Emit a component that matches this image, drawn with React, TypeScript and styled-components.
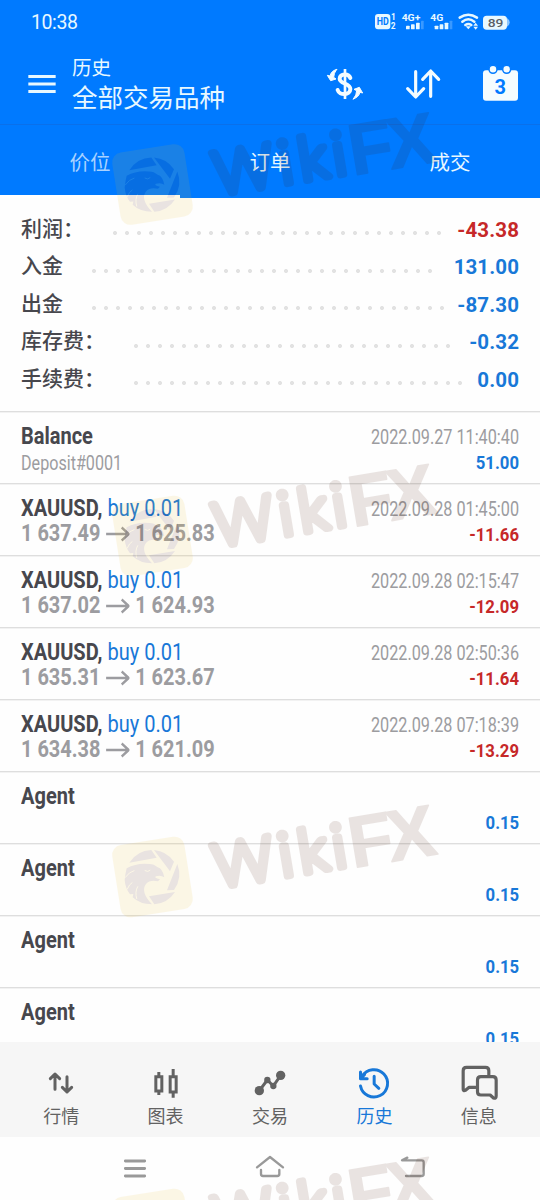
import React from 'react';
import styled, { createGlobalStyle } from 'styled-components';

const GlobalStyle = createGlobalStyle`
  * { box-sizing: border-box; }
  body { margin: 0; background: #fff; }
`;

const latin = `Roboto, "Noto Sans CJK SC", sans-serif`;
const blue = '#007aff';
const valueBlue = '#1878d8';
const lossRed = '#c62828';

const Screen = styled.div`
  position: relative;
  display: flex;
  flex-direction: column;
  width: 540px;
  height: 1200px;
  overflow: hidden;
  background: #fefefe;
  font-family: ${latin};
  color: #47474d;
`;

const Header = styled.header`
  flex: none;
  background: ${blue};
  color: #e8f8ff;
`;

const StatusBar = styled.div`
  display: flex;
  align-items: center;
  justify-content: space-between;
  height: 44px;
  padding: 0 28px 4px 31px;
`;

const Clock = styled.span`
  font-size: 19.5px;
  line-height: 24px;
  padding-top: 5px;
  letter-spacing: -0.4px;
`;

const AppBar = styled.div`
  display: flex;
  align-items: center;
  height: 81px;
  padding: 0 20px 0 22px;
  border-bottom: 1px solid #0a70ea;
`;

const Titles = styled.div`
  flex: 1;
  margin-left: 10px;
  padding-top: 2px;
`;

const Title = styled.div`
  font-size: 19.5px;
  line-height: 27px;
`;

const Subtitle = styled.div`
  font-size: 25.5px;
  line-height: 33px;
`;

const Actions = styled.div`
  display: flex;
  gap: 37.5px;
`;

const Tabs = styled.div`
  display: flex;
  height: 73px;
`;

const Tab = styled.div<{ $active?: boolean }>`
  flex: 1;
  text-align: center;
  font-size: 20.5px;
  line-height: 76px;
  height: 73px;
  color: ${p => (p.$active ? '#a9d2ff' : '#e8f8ff')};
  border-bottom: 3px solid ${p => (p.$active ? '#fff' : blue)};
`;

const Summary = styled.section`
  flex: none;
  height: 213px;
  padding: 13px 21px 0;
`;

const SummaryRow = styled.div`
  display: flex;
  align-items: center;
  height: 37.5px;
`;

const SummaryLabel = styled.span`
  font-size: 21px;
  line-height: 35px;
  padding-bottom: 1px;
  font-weight: 500;
`;

const Dots = styled.span<{ $count: number }>`
  width: ${p => p.$count * 12}px;
  height: 4px;
  margin: 7px 0 0 29px;
  background: radial-gradient(circle at 2px 2px, #e2e2e2 1.7px, transparent 2.3px) 0 0 / 12px 4px repeat-x;
`;

const SummaryValue = styled.span<{ $loss?: boolean }>`
  margin-left: auto;
  font-size: 20.5px;
  font-weight: 700;
  letter-spacing: 0.1px;
  color: ${p => (p.$loss ? lossRed : valueBlue)};
`;

const List = styled.section`
  flex: 1;
  min-height: 0;
  overflow: hidden;
`;

const Row = styled.div`
  display: flex;
  justify-content: space-between;
  height: 72px;
  padding: 12px 21px 0;
  border-top: 1px solid #dedede;
  box-shadow: inset 0 1px 0 #f2f2f2;
  white-space: nowrap;
`;

const RowRight = styled.div`
  padding-top: 1px;
  text-align: right;
`;

const Heading = styled.div`
  font-size: 23px;
  line-height: 26px;
  font-weight: 700;
  transform: scaleX(0.87);
  transform-origin: left top;
`;

const Side = styled.span`
  font-weight: 400;
  color: ${valueBlue};
`;

const Note = styled.div`
  font-size: 19.5px;
  line-height: 27px;
  color: #9c9ca0;
  transform: scaleX(0.827);
  transform-origin: left top;
`;

const Prices = styled.div`
  display: flex;
  align-items: center;
  font-size: 23px;
  line-height: 23px;
  font-weight: 700;
  color: #9c9ca0;
  transform: scaleX(0.868);
  transform-origin: left top;
`;

const Arrow = styled.svg`
  width: 27px;
  height: 16px;
  margin: 0 6.5px;
`;

const Time = styled.div`
  font-size: 19.5px;
  line-height: 26px;
  color: #9c9ca0;
  transform: scaleX(0.832);
  transform-origin: right top;
`;

const Amount = styled.div<{ $loss?: boolean }>`
  font-size: 19px;
  line-height: 23px;
  font-weight: 700;
  color: ${p => (p.$loss ? lossRed : valueBlue)};
  transform: scaleX(0.88);
  transform-origin: right top;
`;

const BottomNav = styled.nav`
  flex: none;
  display: flex;
  height: 95px;
  padding: 23px 9px 0;
  background: #f6f6f6;
`;

const NavItem = styled.div<{ $active?: boolean }>`
  flex: 1;
  display: flex;
  flex-direction: column;
  align-items: center;
  font-size: 18px;
  line-height: 31px;
  color: ${p => (p.$active ? valueBlue : '#626262')};
`;

const SystemNav = styled.div`
  flex: none;
  display: flex;
  gap: 95px;
  height: 63px;
  padding: 16px 0 0 115px;
  color: #999;
`;

const Icon = styled.svg`
  display: block;
  flex: none;
  fill: none;
  stroke: currentColor;
  stroke-linecap: round;
  stroke-linejoin: round;
`;

const WatermarkLayer = styled.svg`
  position: absolute;
  left: 0;
  top: 0;
  pointer-events: none;
`;

const StatusIcons = () => (
  <svg width="140" height="20" viewBox="306 28 420 60" fill="#e8f8ff" fontFamily="Roboto" fontWeight="700">
    <rect x="315" y="40" width="46" height="46" rx="9" />
    <text x="320" y="74" fontSize="31" fill={blue} textLength="36" lengthAdjust="spacingAndGlyphs">HD</text>
    <text x="363" y="59" fontSize="25">1</text>
    <text x="362" y="85" fontSize="25">2</text>
    <text x="395" y="60" fontSize="28" textLength="56" lengthAdjust="spacingAndGlyphs">4G+</text>
    <text x="481" y="60" fontSize="28" textLength="39" lengthAdjust="spacingAndGlyphs">4G</text>
    {[408, 494].map(x => (
      <g key={x}>
        <rect x={x} y="75" width="11" height="11" rx="2" />
        <rect x={x + 15} y="71" width="11" height="15" rx="2" />
        <rect x={x + 30} y="66" width="11" height="20" rx="2" />
        <rect x={x + 45} y="60" width="8" height="26" rx="2" opacity="0.25" />
      </g>
    ))}
    <g fill="none" stroke="#e8f8ff" strokeWidth="7.500" strokeLinecap="round">
      <path d="M569 51Q595 34 621 51" />
      <path d="M577 63Q595 49 613 63" />
      <path d="M586 73Q595 67 604 73" />
    </g>
    <path d="M587 77h16l-8 9zM610 75l7-9 7 9zM610 78l7 9 7-9z" />
    <rect x="639" y="45" width="72" height="42" rx="11" />
    <path d="M711 52q8 5 8 13t-8 13z" opacity="0.6" />
    <text x="653" y="78" fontSize="35" fontWeight="500" fill="#5a5f66" textLength="47" lengthAdjust="spacingAndGlyphs">89</text>
  </svg>
);

const MenuIcon = () => (
  <Icon width="40" height="40" viewBox="66 192 120 120" strokeWidth="9">
    <path strokeLinecap="butt" d="M85 229.500h82M85 252h82M85 274.500h82" />
  </Icon>
);

const CurrencyIcon = () => (
  <Icon width="40" height="40" viewBox="165 192 120 120" strokeWidth="12" color="#f4fcff">
    <path strokeWidth="8" strokeLinecap="butt" d="M225 207v90" />
    <path d="M241 234C236 219 209 220 209 236C209 252 241 249 241 267C241 286 208 287 203 270" />
    <path strokeWidth="3" fill="currentColor" d="M200 208Q183 213 180 228L172 226L182 242L198 237L191 232Q191 220 200 208z" />
    <path strokeWidth="3" fill="currentColor" d="M250 297Q267 291 270 277L278 279L268 262L252 268L260 272Q260 285 250 297z" />
  </Icon>
);

const SortIcon = () => (
  <Icon width="40" height="40" viewBox="399 192 120 120" strokeWidth="9.500" color="#f4fcff">
    <path d="M437 215v75M413 266l24 25 24-25M482 289v-75M458 238l24-25 24 25" />
  </Icon>
);

const CalendarIcon = () => (
  <Icon width="40" height="40" viewBox="630 192 120 120" color="#f4fcff">
    <rect x="639" y="211" width="105" height="91" rx="9" fill="currentColor" stroke="none" />
    {[669, 710].map(x => (
      <circle key={x} cx={x} cy="208" r="12" fill="#f4fcff" stroke={blue} strokeWidth="4.500" />
    ))}
    <text x="691" y="283" textAnchor="middle" fontFamily="Roboto" fontWeight="700" fontSize="60" fill={blue} stroke="none">3</text>
  </Icon>
);

const navItems = [
  {
    label: '行情',
    box: '123 105 120 108',
    art: <path d="M165 178v-46M151 146l14-14 14 14M201 140v46M187 172l14 14 14-14" />,
  },
  {
    label: '图表',
    box: '436.5 105 120 108',
    art: (
      <g strokeLinecap="butt" strokeLinejoin="miter">
        <path d="M466 140h18v43h-18zM475 126v12M475 185v10M509 140h18v46h-18zM518 117v21M518 188v15" />
      </g>
    ),
  },
  {
    label: '交易',
    box: '45 75 120 108',
    art: (
      <g>
        <path d="M73 152L97 120L115 138L137 106" />
        <g fill="currentColor" stroke="none">
          <circle cx="73" cy="152" r="14" />
          <circle cx="97" cy="120" r="9.500" />
          <circle cx="115" cy="138" r="9.500" />
          <circle cx="137" cy="106" r="14" />
        </g>
      </g>
    ),
  },
  {
    label: '历史',
    active: true,
    box: '253.5 105 120 108',
    art: (
      <g>
        <path d="M273 168A41 41 0 1 0 278 139" />
        <path d="M273 126v20h20M273 146l12-12M314 139v23l14 13" />
      </g>
    ),
  },
  {
    label: '信息',
    box: '565.5 105 120 108',
    art: (
      <g strokeWidth="9.500">
        <path d="M655 134V122Q655 112 645 112H588Q578 112 578 122V178Q578 184 585 181L596 172H615" />
        <path d="M631 140H667Q677 140 677 150V198Q677 207 669 204L659 195H631Q621 195 621 185V150Q621 140 631 140z" />
      </g>
    ),
  },
];

const summary = [
  { label: '利润：', dots: 28, value: '-43.38', loss: true },
  { label: '入金', dots: 29, value: '131.00' },
  { label: '出金', dots: 30, value: '-87.30' },
  { label: '库存费：', dots: 27, value: '-0.32' },
  { label: '手续费：', dots: 28, value: '0.00' },
];

const trades = [
  { open: '1 637.49', close: '1 625.83', time: '2022.09.28 01:45:00', amount: '-11.66' },
  { open: '1 637.02', close: '1 624.93', time: '2022.09.28 02:15:47', amount: '-12.09' },
  { open: '1 635.31', close: '1 623.67', time: '2022.09.28 02:50:36', amount: '-11.64' },
  { open: '1 634.38', close: '1 621.09', time: '2022.09.28 07:18:39', amount: '-13.29' },
];

const Watermark = ({ top }: { top: number }) => (
  <g transform={`translate(0 ${top})`} opacity="0.11">
    <rect x="-36.500" y="-36.500" width="73" height="73" rx="10" transform="translate(152.500 184.500) rotate(-9)" fill="#ecbc26" />
    <g transform="translate(90 97.500) scale(0.33333)" fill="#461400">
      <path d="M118 218A82 82 0 0 1 184 180L200 203z" />
      <path d="M192 180A82 82 0 0 1 252 215L240 244z" />
      <path d="M262 222A82 82 0 0 1 252 300L231 301z" />
      <path d="M255 306A82 82 0 0 1 193 343L177 319z" />
      <path d="M110 235Q140 218 178 222Q192 222 203 232Q218 236 223 262Q212 254 198 259Q190 264 210 268L204 274Q180 268 168 282Q150 305 186 343Q150 343 128 322L130 312L120 313Q106 295 104 270Q106 250 110 235z" />
    </g>
    <g transform="translate(90 97.500) scale(0.33333)" stroke="#ecbc26" fill="none" strokeWidth="3" strokeLinecap="round">
      <path d="M165 242Q174 248 180 241M106 262Q118 245 132 242M112 297Q118 282 126 278M140 326Q134 305 143 290" />
    </g>
    <g transform="translate(210 200.500) rotate(-9.500)" fill="#461400" stroke="#461400" strokeLinejoin="round">
      <g fontFamily="Lato" fontWeight="300" fontSize="60" strokeWidth="7.500">
        <text x="8" y="-4" textLength="60" lengthAdjust="spacingAndGlyphs">W</text>
        <text x="74" y="-4">i</text>
        <text x="94" y="-4">k</text>
        <text x="128" y="-4">i</text>
      </g>
      <g fontFamily="Liberation Sans" fontWeight="700" fontSize="72" strokeWidth="1.500">
        <text x="145" y="-1">F</text>
        <text x="184" y="-1">X</text>
      </g>
    </g>
  </g>
);

export default function App() {
  return (
    <Screen>
      <GlobalStyle />
      <Header>
        <StatusBar>
          <Clock>10:38</Clock>
          <StatusIcons />
        </StatusBar>
        <AppBar>
          <MenuIcon />
          <Titles>
            <Title>历史</Title>
            <Subtitle>全部交易品种</Subtitle>
          </Titles>
          <Actions>
            <CurrencyIcon />
            <SortIcon />
            <CalendarIcon />
          </Actions>
        </AppBar>
        <Tabs>
          <Tab $active>价位</Tab>
          <Tab>订单</Tab>
          <Tab>成交</Tab>
        </Tabs>
      </Header>

      <Summary>
        {summary.map(s => (
          <SummaryRow key={s.label}>
            <SummaryLabel>{s.label}</SummaryLabel>
            <Dots $count={s.dots} />
            <SummaryValue $loss={s.loss}>{s.value}</SummaryValue>
          </SummaryRow>
        ))}
      </Summary>

      <List>
        <Row>
          <div>
            <Heading>Balance</Heading>
            <Note>Deposit#0001</Note>
          </div>
          <RowRight>
            <Time>2022.09.27 11:40:40</Time>
            <Amount>51.00</Amount>
          </RowRight>
        </Row>
        {trades.map(t => (
          <Row key={t.time}>
            <div>
              <Heading>
                XAUUSD, <Side>buy 0.01</Side>
              </Heading>
              <Prices>
                {t.open}
                <Arrow viewBox="0 0 27 16" fill="none" stroke="currentColor" strokeWidth="2.600">
                  <path d="M0 8h26M18 1.500l8 6.500-8 6.500" />
                </Arrow>
                {t.close}
              </Prices>
            </div>
            <RowRight>
              <Time>{t.time}</Time>
              <Amount $loss>{t.amount}</Amount>
            </RowRight>
          </Row>
        ))}
        {[0, 1, 2, 3].map(i => (
          <Row key={i}>
            <div>
              <Heading>Agent</Heading>
            </div>
            <RowRight>
              <Time>&nbsp;</Time>
              <Amount>0.15</Amount>
            </RowRight>
          </Row>
        ))}
      </List>

      <BottomNav>
        {navItems.map(n => (
          <NavItem key={n.label} $active={n.active}>
            <Icon width="40" height="36" viewBox={n.box} strokeWidth="9">
              {n.art}
            </Icon>
            {n.label}
          </NavItem>
        ))}
      </BottomNav>

      <SystemNav>
        <Icon width="40" height="30" viewBox="345 369 120 90" strokeWidth="8.500">
          <path d="M376 393h58M376 415.500h58M376 438h58" />
        </Icon>
        <Icon width="40" height="30" viewBox="45 339 120 90" strokeWidth="7">
          <path d="M66 382L105 351L144 382M78 390V402Q78 408 84 408H127Q133 408 133 402V390" />
        </Icon>
        <Icon width="40" height="30" viewBox="345 369 120 90" strokeWidth="7">
          <path d="M412 383L396 391H455Q461 391 461 397V432Q461 438 455 438H408" />
        </Icon>
      </SystemNav>

      <WatermarkLayer width="540" height="1200">
        {[0, 351.5, 692.5, 1044.5].map(top => (
          <Watermark key={top} top={top} />
        ))}
      </WatermarkLayer>
    </Screen>
  );
}
